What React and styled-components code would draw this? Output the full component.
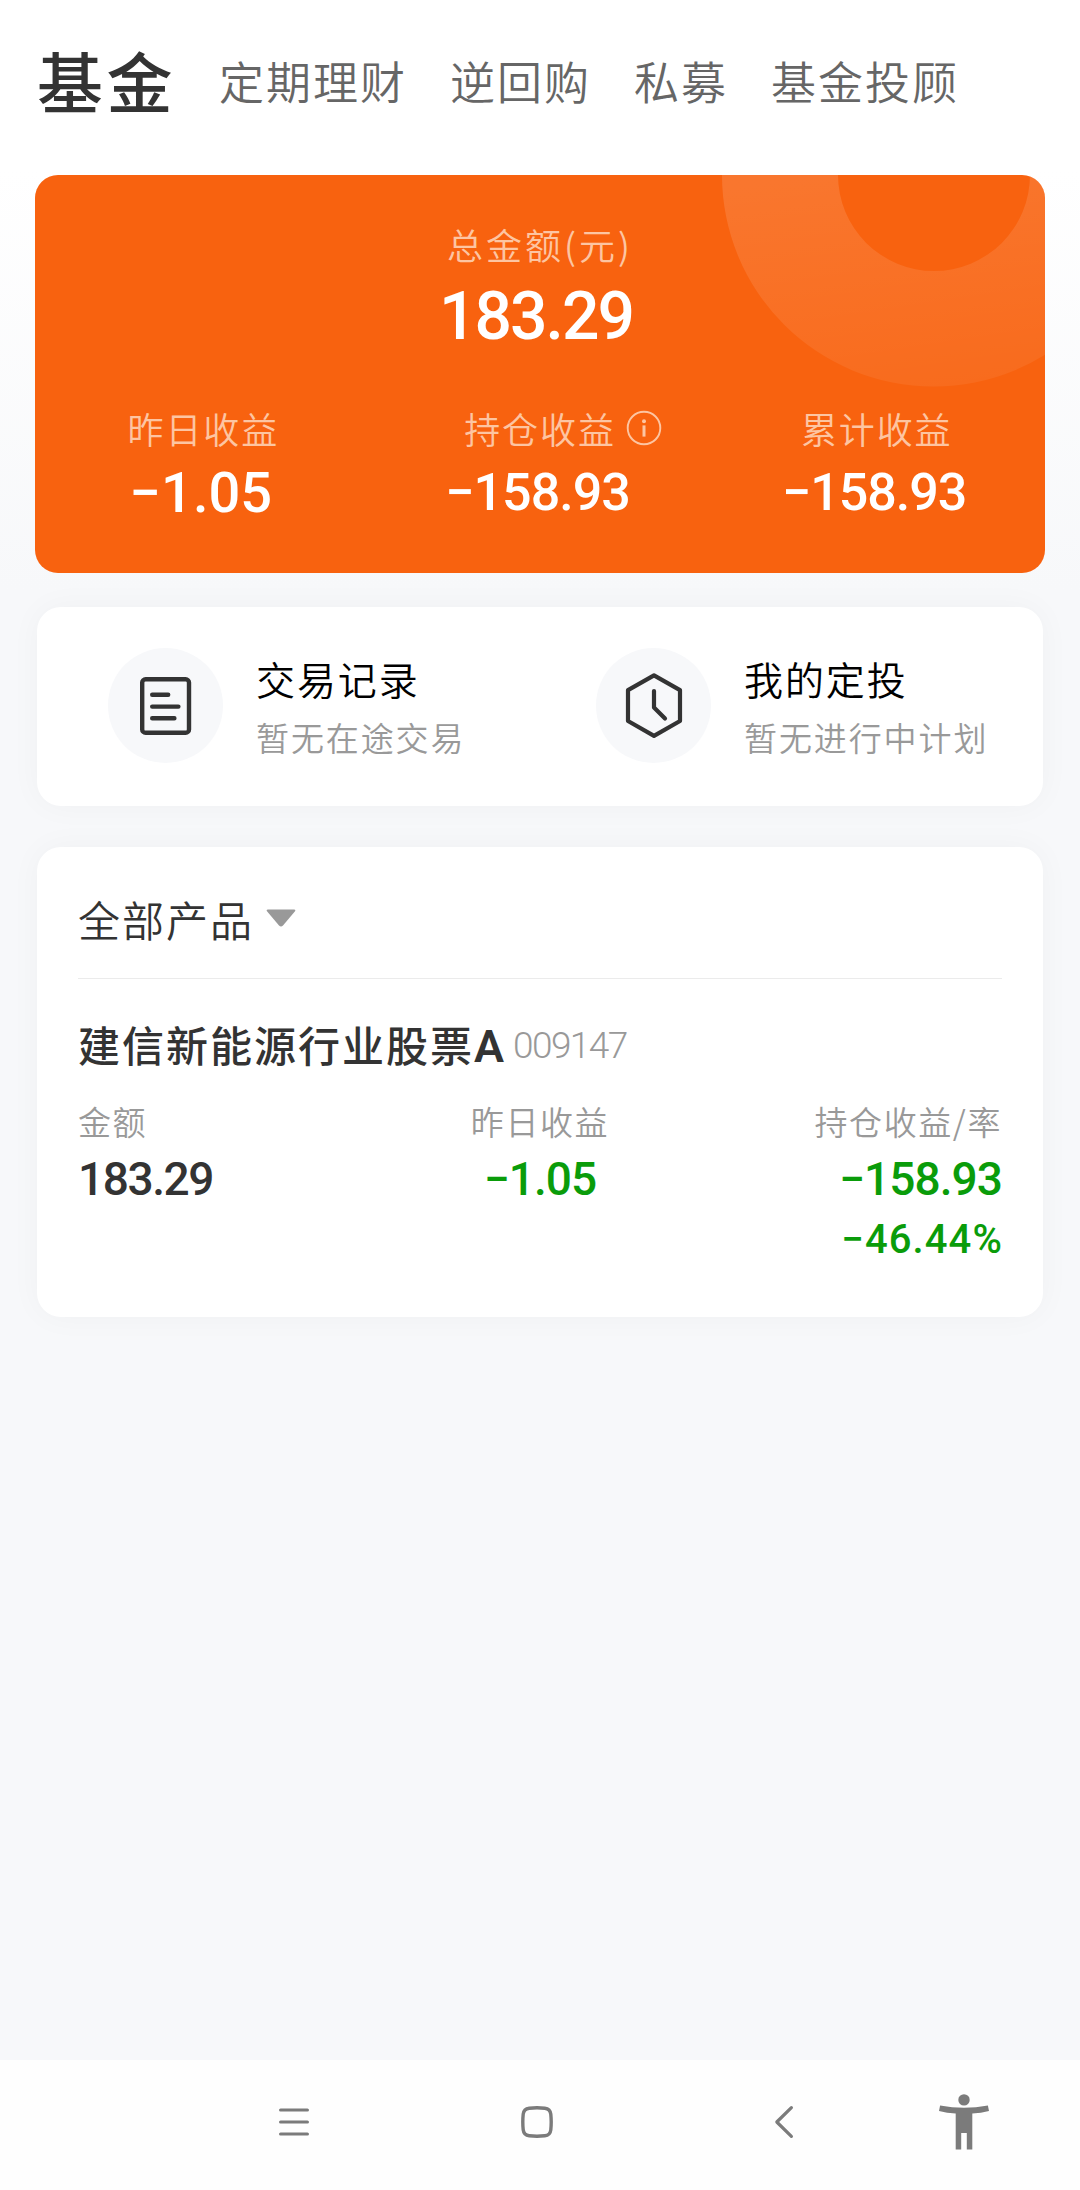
import React from 'react'
import styled, { createGlobalStyle } from 'styled-components'

// --- constants ---
const COLORS = {
  white: '#ffffff',
  page: '#f7f8fa',
  orange: '#f8620f',
  dark: '#333333',
  tab: '#666666',
  muted: '#999999',
  green: '#0a9c0a',
  nav: '#7b7b7b',
}

const TEXT_FONT = '"Noto Sans CJK SC", sans-serif'
const NUM_FONT = 'Roboto, sans-serif'

// --- data ---
const TABS = ['定期理财', '逆回购', '私募', '基金投顾']

const STATS = [
  { label: '昨日收益', value: '−1.05', large: true },
  { label: '持仓收益', value: '−158.93', info: true },
  { label: '累计收益', value: '−158.93' },
]

// --- icons ---
const InfoIcon = () => (
  <svg width="36" height="36" viewBox="0 0 36 36" fill="none">
    <circle cx="18" cy="18" r="16.3" stroke="currentColor" strokeWidth="1.9" />
    <circle cx="18" cy="11.2" r="2" fill="currentColor" />
    <path d="M18 15.4V26.6" stroke="currentColor" strokeWidth="3" />
  </svg>
)

const RecordIcon = () => (
  <svg width="52" height="58" viewBox="0 0 52 58" fill="none" stroke={COLORS.dark} strokeWidth="4.4">
    <rect x="2.2" y="2.2" width="46.8" height="53.6" rx="3.4" />
    <path d="M12.2 17.8H28.2M12.2 29.6H38.4M12.2 41.3H34.4" strokeLinecap="round" />
  </svg>
)

const PlanIcon = () => (
  <svg
    width="58"
    height="66"
    viewBox="0 0 58 66"
    fill="none"
    stroke={COLORS.dark}
    strokeWidth="4.2"
    strokeLinejoin="round"
    strokeLinecap="round"
  >
    <path d="M29 2.4L55 17.2V48L29 62.8L3 48V17.2Z" />
    <path d="M29 18V34.6L40 45.6" />
  </svg>
)

const ArrowDown = () => (
  <svg width="30" height="18" viewBox="0 0 30 18">
    <path d="M2 0.5H28Q30.2 0.8 28.8 2.6L17 16.4Q15 18.4 13 16.4L1.2 2.6Q-0.2 0.8 2 0.5Z" fill={COLORS.muted} />
  </svg>
)

const MenuIcon = () => (
  <svg width="32" height="32" viewBox="0 0 32 32" stroke={COLORS.nav} strokeWidth="3.2" strokeLinecap="round">
    <path d="M2.6 4H29.4M2.6 16H29.4M2.6 28H29.4" />
  </svg>
)

const HomeIcon = () => (
  <svg width="32" height="32" viewBox="0 0 32 32" fill="none" stroke={COLORS.nav} strokeWidth="3.4">
    <path d="M8.2 2.2Q16 1.4 23.8 2.2Q29.2 2.8 29.8 8.2Q30.6 16 29.8 23.8Q29.2 29.2 23.8 29.8Q16 30.6 8.2 29.8Q2.8 29.2 2.2 23.8Q1.4 16 2.2 8.2Q2.8 2.8 8.2 2.2Z" />
  </svg>
)

const BackIcon = () => (
  <svg width="20" height="34" viewBox="0 0 20 34" fill="none" stroke={COLORS.nav} strokeWidth="3.2" strokeLinecap="round">
    <path d="M17.4 2.6L2.8 17L17.4 31.4" strokeLinejoin="round" />
  </svg>
)

const PersonIcon = () => (
  <svg width="50" height="56" viewBox="0 0 50 56" fill={COLORS.nav}>
    <circle cx="25" cy="5.9" r="5.7" />
    <path d="M1.1 11.4Q25 16.2 48.9 11.4L50 16.9Q42 19 33.3 19.6V55.6H27.8V38.9H22.2V55.6H16.7V19.6Q8 19 0 16.9Z" />
  </svg>
)

const App = () => {
  return (
    <>
      <GlobalStyle />
      <Screen>
        <Header>
          <Title>基金</Title>
          {TABS.map((tab) => (
            <Tab key={tab}>{tab}</Tab>
          ))}
        </Header>

        <Balance>
          <Ring viewBox="0 0 323 212">
            <defs>
              <linearGradient id="ring" x1="0.2" y1="0" x2="0.5" y2="1">
                <stop offset="0" stopColor="#fff" stopOpacity="0.13" />
                <stop offset="1" stopColor="#fff" stopOpacity="0.06" />
              </linearGradient>
            </defs>
            <path d="M0 0A211.5 211.5 0 0 0 423 0H308A96 96 0 0 1 116 0Z" fill="url(#ring)" />
          </Ring>
          <BalanceLabel $wide>总金额(元)</BalanceLabel>
          <BalanceValue>183.29</BalanceValue>
          <Stats>
            {STATS.map(({ label, value, large, info }) => (
              <Stat key={label}>
                <BalanceLabel>
                  {label}
                  {info && (
                    <InfoMark>
                      <InfoIcon />
                    </InfoMark>
                  )}
                </BalanceLabel>
                <StatValue $large={large}>{value}</StatValue>
              </Stat>
            ))}
          </Stats>
        </Balance>

        <Shortcuts>
          <Shortcut>
            <ShortcutIcon>
              <RecordIcon />
            </ShortcutIcon>
            <ShortcutText>
              <ShortcutTitle>交易记录</ShortcutTitle>
              <ShortcutDescr>暂无在途交易</ShortcutDescr>
            </ShortcutText>
          </Shortcut>
          <Shortcut>
            <ShortcutIcon>
              <PlanIcon />
            </ShortcutIcon>
            <ShortcutText>
              <ShortcutTitle>我的定投</ShortcutTitle>
              <ShortcutDescr>暂无进行中计划</ShortcutDescr>
            </ShortcutText>
          </Shortcut>
        </Shortcuts>

        <Products>
          <Filter>
            全部产品
            <ArrowDown />
          </Filter>
          <FundName>
            建信新能源行业股票<FundClass>A</FundClass>
            <FundCode>009147</FundCode>
          </FundName>
          <Figures>
            <Figure $align="flex-start">
              <FigureLabel>金额</FigureLabel>
              <FigureValue>183.29</FigureValue>
            </Figure>
            <Figure $align="center">
              <FigureLabel>昨日收益</FigureLabel>
              <FigureValue $color={COLORS.green}>−1.05</FigureValue>
            </Figure>
            <Figure $align="flex-end">
              <FigureLabel>持仓收益/率</FigureLabel>
              <FigureValue $color={COLORS.green}>−158.93</FigureValue>
              <FigureRate>−46.44%</FigureRate>
            </Figure>
          </Figures>
        </Products>

        <NavBar>
          <NavSlot $width={174}>
            <MenuIcon />
          </NavSlot>
          <NavSlot $width={312}>
            <HomeIcon />
          </NavSlot>
          <NavSlot $width={182}>
            <BackIcon />
          </NavSlot>
          <NavSlot $width={178}>
            <PersonIcon />
          </NavSlot>
        </NavBar>
      </Screen>
    </>
  )
}

const GlobalStyle = createGlobalStyle`
  * {
    box-sizing: border-box;
  }

  body {
    margin: 0;
    font-family: ${TEXT_FONT};
  }

  svg {
    display: block;
  }
`

const Screen = styled.main`
  display: flex;
  flex-direction: column;
  width: 1080px;
  height: 2190px;
  overflow: hidden;
  background: linear-gradient(180deg, ${COLORS.white} 170px, ${COLORS.page} 590px);
`

const Header = styled.header`
  display: flex;
  align-items: center;
  gap: 43px;
  height: 175px;
  padding: 0 0 17px 37px;
  white-space: nowrap;
`

const Title = styled.h1`
  margin: 0;
  font-size: 66px;
  font-weight: 500;
  line-height: 90px;
  letter-spacing: 3.5px;
  color: ${COLORS.dark};
`

const Tab = styled.span`
  padding-top: 4px;
  font-size: 45px;
  font-weight: 350;
  line-height: 60px;
  letter-spacing: 2px;
  color: ${COLORS.tab};
`

const Balance = styled.section`
  position: relative;
  overflow: hidden;
  display: flex;
  flex-direction: column;
  align-items: center;
  height: 398px;
  margin: 0 35px;
  padding-top: 44px;
  border-radius: 23px;
  background-color: ${COLORS.orange};
`

const Ring = styled.svg`
  position: absolute;
  top: 0;
  right: 0;
  width: 323px;
  height: 212px;
`

const BalanceLabel = styled.div`
  position: relative;
  font-size: 36px;
  font-weight: 350;
  line-height: 50px;
  letter-spacing: ${({ $wide }) => ($wide ? '3px' : '1.9px')};
  color: #fdc5a2;
`

const BalanceValue = styled.div`
  margin-top: 13px;
  padding-right: 8px;
  font-family: ${NUM_FONT};
  font-size: 66px;
  font-weight: 550;
  line-height: 70px;
  letter-spacing: -2px;
  color: ${COLORS.white};
`

const Stats = styled.div`
  display: flex;
  align-self: stretch;
  margin-top: 51px;
`

const Stat = styled.div`
  display: flex;
  flex: 1;
  flex-direction: column;
  align-items: center;
`

const InfoMark = styled.span`
  position: absolute;
  top: 7px;
  left: 100%;
  margin-left: 10px;
`

const StatValue = styled.div`
  margin-top: 10px;
  padding-right: 5px;
  font-family: ${NUM_FONT};
  font-size: ${({ $large }) => ($large ? '56px' : '52px')};
  font-weight: 550;
  line-height: 60px;
  letter-spacing: ${({ $large }) => ($large ? '0' : '-1px')};
  color: ${COLORS.white};
`

const Card = styled.section`
  margin: 0 37px;
  border-radius: 24px;
  background-color: ${COLORS.white};
  box-shadow: 0 0 32px rgba(0, 0, 0, 0.035);
`

const Shortcuts = styled(Card)`
  display: grid;
  grid-template-columns: 488px 1fr;
  align-items: center;
  height: 199px;
  margin-top: 34px;
  padding: 0 0 2px 71px;
`

const Shortcut = styled.div`
  display: flex;
  align-items: center;
  gap: 33px;
  white-space: nowrap;
`

const ShortcutIcon = styled.div`
  display: flex;
  align-items: center;
  justify-content: center;
  width: 115px;
  height: 115px;
  border-radius: 50%;
  background-color: ${COLORS.page};
`

const ShortcutText = styled.div`
  padding-top: 4px;
`

const ShortcutTitle = styled.div`
  font-size: 39px;
  font-weight: 350;
  line-height: 59px;
  letter-spacing: 1.9px;
  color: #000;
`

const ShortcutDescr = styled.div`
  font-size: 33px;
  font-weight: 350;
  line-height: 59px;
  letter-spacing: 1.9px;
  color: ${COLORS.muted};
`

const Products = styled(Card)`
  height: 470px;
  margin-top: 41px;
  padding: 0 41px;
`

const Filter = styled.div`
  display: flex;
  align-items: center;
  gap: 12px;
  height: 132px;
  padding-top: 11px;
  border-bottom: 1px solid #ebebeb;
  font-size: 42px;
  font-weight: 350;
  letter-spacing: 2px;
  color: ${COLORS.dark};
`

const FundName = styled.h2`
  display: flex;
  align-items: baseline;
  margin: 33px 0 0;
  font-size: 42px;
  font-weight: 500;
  line-height: 64px;
  letter-spacing: 2px;
  color: ${COLORS.dark};
`

const FundClass = styled.span`
  font-family: ${NUM_FONT};
  font-size: 45px;
  font-weight: 600;
  letter-spacing: 0;
`

const FundCode = styled.span`
  margin: 1px 0 0 9px;
  align-self: center;
  font-family: ${NUM_FONT};
  font-size: 37px;
  font-weight: 300;
  letter-spacing: -1.6px;
  color: ${COLORS.muted};
`

const Figures = styled.div`
  display: grid;
  grid-template-columns: repeat(3, 1fr);
  margin-top: 19px;
`

const Figure = styled.div`
  display: flex;
  flex-direction: column;
  align-items: ${({ $align }) => $align};
`

const FigureLabel = styled.div`
  font-size: 33px;
  font-weight: 350;
  line-height: 46px;
  letter-spacing: 1.6px;
  color: ${COLORS.muted};
`

const FigureValue = styled.div`
  margin-top: 5px;
  font-family: ${NUM_FONT};
  font-size: 46px;
  font-weight: 550;
  line-height: 60px;
  letter-spacing: ${({ $color }) => ($color ? '-0.9px' : '-1.4px')};
  color: ${({ $color }) => $color || COLORS.dark};
`

const FigureRate = styled.div`
  margin: 1px -1px 0 0;
  font-family: ${NUM_FONT};
  font-size: 40px;
  font-weight: 550;
  line-height: 60px;
  letter-spacing: 1.1px;
  color: ${COLORS.green};
`

const NavBar = styled.nav`
  display: flex;
  align-items: center;
  height: 130px;
  margin-top: auto;
  padding: 0 0 6px 207px;
  background-color: #fefefe;
`

const NavSlot = styled.div`
  display: flex;
  justify-content: center;
  width: ${({ $width }) => $width}px;
`

export default App
